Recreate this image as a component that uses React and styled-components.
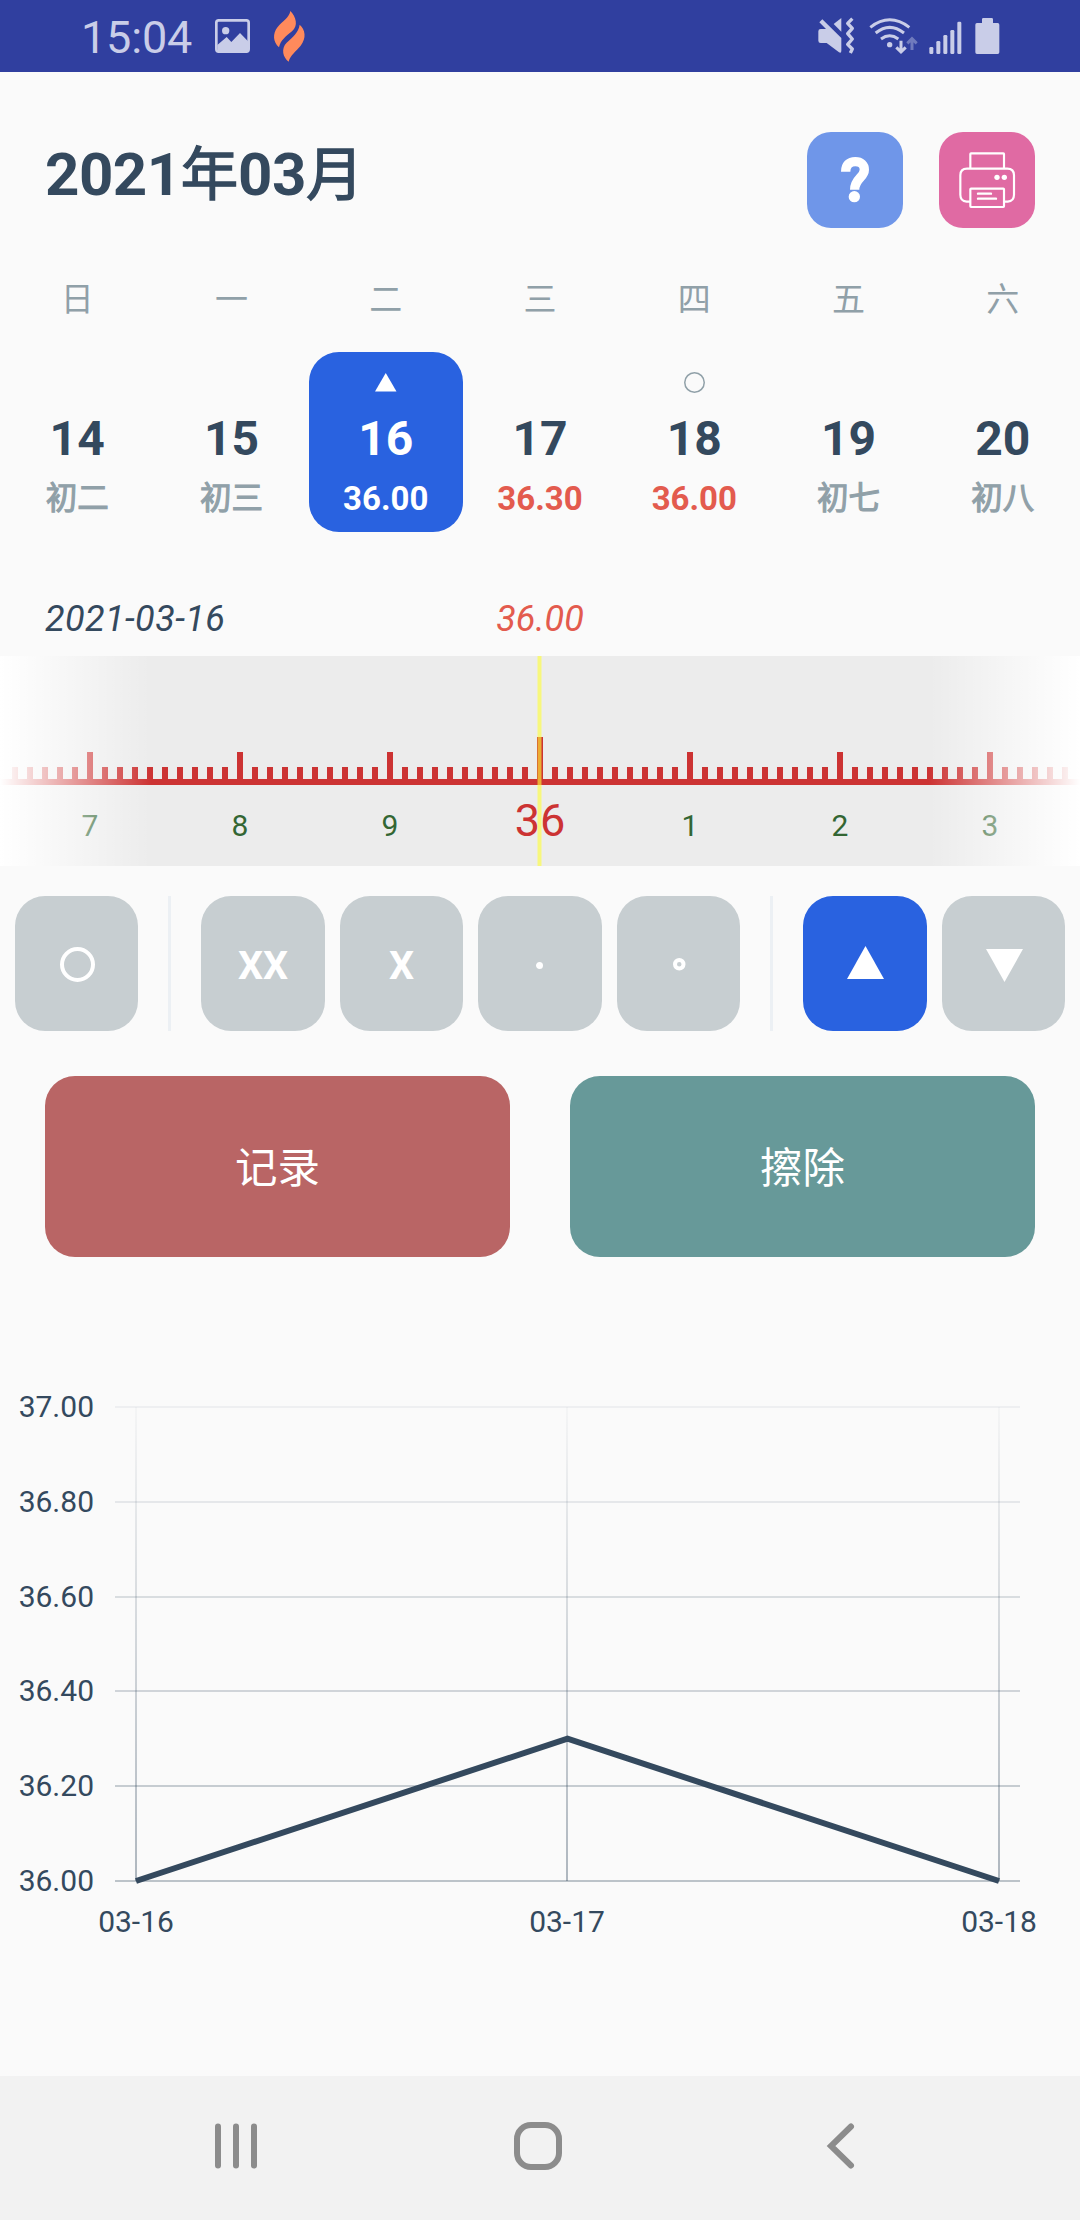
import React from "react";
import styled, { createGlobalStyle, css } from "styled-components";

const GlobalStyle = createGlobalStyle`
  * { box-sizing: border-box; }
  body {
    margin: 0;
    background: #fafafa;
    font-family: Roboto, "Noto Sans CJK SC", sans-serif;
  }
`;

const navy = "#34495e";
const blue = "#2962e0";
const muted = "#90a0a8";
const coral = "#e35b4e";

const Screen = styled.div`
  width: 1080px;
  height: 2220px;
  display: flex;
  flex-direction: column;
  background: #fafafa;
  color: ${navy};
  overflow: hidden;
`;

const StatusBar = styled.header`
  flex: none;
  height: 72px;
  padding: 0 80px 0 81px;
  display: flex;
  justify-content: space-between;
  background: #303f9f;
  color: #c9cde8;
`;

const StatusGroup = styled.div`
  display: flex;
  align-items: flex-start;
`;

const Clock = styled.span`
  width: 134px;
  font-size: 45px;
  line-height: 53px;
  padding-top: 11px;
  letter-spacing: -0.2px;
`;

const Glyph = styled.svg`
  display: block;
  flex: none;
  overflow: visible;
  margin: ${(p) => p.$margin || 0};
`;

const TitleBar = styled.div`
  flex: none;
  height: 204px;
  padding: 60px 45px 0;
  display: flex;
  justify-content: space-between;
  align-items: flex-start;
`;

const Month = styled.h1`
  margin: 0;
  padding-top: 7px;
  font-size: 60px;
  font-weight: 700;
  line-height: 72px;
  letter-spacing: -0.5px;
`;

const Han = styled.span`
  font-size: 0.957em;
  font-weight: 400;
  letter-spacing: 0;
  -webkit-text-stroke: 1.4px currentColor;
`;

const Actions = styled.div`
  display: flex;
  gap: 36px;
`;

const ActionButton = styled.button`
  width: 96px;
  height: 96px;
  padding: 0;
  border: 0;
  border-radius: 24px;
  background: ${(p) => p.$tone};
`;

const Weekdays = styled.div`
  flex: none;
  height: 76px;
  display: grid;
  grid-template-columns: repeat(7, 1fr);
  padding-bottom: 28px;
  align-items: center;
  justify-items: center;
  font-size: 33px;
  line-height: 46px;
  color: ${muted};
`;

const Week = styled.div`
  flex: none;
  height: 180px;
  display: grid;
  grid-template-columns: repeat(7, 1fr);
`;

const DayCell = styled.div`
  display: flex;
  flex-direction: column;
  align-items: center;
  padding-top: 15px;
  border-radius: 30px;
  color: ${navy};
  ${(p) => p.$active && css`
    background: ${blue};
    color: #fff;
  `}
`;

const DayMark = styled.div`
  height: 32px;
  padding-bottom: 2px;
  display: flex;
  align-items: center;
  color: ${(p) => (p.$active ? "#fff" : muted)};
`;

const DayNumber = styled.div`
  font-size: 48px;
  font-weight: 700;
  line-height: 60px;
  padding-top: 10px;
`;

const DayNote = styled.div`
  margin-top: 8px;
  font-size: 31.5px;
  line-height: 44px;
  color: ${muted};
  -webkit-text-stroke: 1.1px currentColor;
  ${(p) => p.$reading && css`
    font-size: 33px;
    font-weight: 700;
    color: ${p.$active ? "#fff" : coral};
    -webkit-text-stroke: 0;
  `}
`;

const Summary = styled.div`
  flex: none;
  height: 124px;
  padding: 66px 45px 0;
  display: grid;
  grid-template-columns: 1fr auto 1fr;
  align-items: start;
  font-size: 36px;
  line-height: 42px;
  font-style: italic;
`;

const SummaryDate = styled.span`
  letter-spacing: 0.4px;
`;

const SummaryTemp = styled.span`
  color: ${coral};
`;

const RulerPanel = styled.div`
  flex: none;
  height: 210px;
  background: #ececec;
`;

const TagRow = styled.div`
  flex: none;
  display: flex;
  gap: 15px;
  height: 165px;
  padding: 30px 15px 0;
`;

const TagButton = styled.button`
  flex: 1 1 0;
  min-width: 0;
  padding: 0;
  border: 0;
  border-radius: 30px;
  display: flex;
  align-items: center;
  justify-content: center;
  background: ${(p) => (p.$active ? blue : "#c7ced1")};
  color: #fff;
  font-family: inherit;
  font-size: 39.5px;
  font-weight: 700;
  line-height: 48px;
`;

const TagLabel = styled.span`
  padding-top: 4px;
`;

const TagDivider = styled.div`
  flex: none;
  width: 3px;
  margin: 0 15px;
  background: #ecf0f4;
`;

const CommandRow = styled.div`
  flex: none;
  display: grid;
  grid-template-columns: 1fr 1fr;
  gap: 60px;
  height: 226px;
  padding: 45px 45px 0;
`;

const CommandButton = styled.button`
  padding: 5px 0 0;
  border: 0;
  border-radius: 30px;
  background: ${(p) => p.$tone};
  color: #fff;
  font-family: inherit;
  font-size: 42.5px;
  line-height: 60px;
`;

const ChartPanel = styled.section`
  flex: 1;
  padding-top: 119px;
`;

const NavBar = styled.nav`
  flex: none;
  height: 144px;
  padding: 46px 226px 0 215px;
  display: flex;
  justify-content: space-between;
  background: #f2f2f2;
  color: #8c8c8c;
`;

const Triangle = ({ w, h, down, margin }) => (
  <Glyph $margin={margin} width={w} height={h} viewBox="0 0 20 20" preserveAspectRatio="none">
    <path fill="currentColor" d={down ? "M0 0H20L10 20Z" : "M10 0L20 20H0Z"} />
  </Glyph>
);

const Ring = ({ size, stroke, margin }) => (
  <Glyph $margin={margin} width={size} height={size}>
    <circle cx={size / 2} cy={size / 2} r={(size - stroke) / 2} fill="none" stroke="currentColor" strokeWidth={stroke} />
  </Glyph>
);

const Status = () => (
  <StatusBar>
    <StatusGroup>
      <Clock>15:04</Clock>
      <Glyph width="35" height="34" viewBox="645 57 105 102" $margin="19px 24px 0 0">
        <rect x="649" y="61" width="97" height="94" rx="7" fill="none" stroke="currentColor" strokeWidth="8" />
        <circle cx="677" cy="92" r="11" fill="currentColor" />
        <path d="M652 135L680 111L694 126L720 99L744 124V154H652Z" fill="currentColor" />
      </Glyph>
      <Glyph width="31" height="51" viewBox="822 32 93 153" $margin="11px 0 0" fill="#ff8a5c">
        <path d="M871 32C888 49 896 76 876 93C858 108 842 119 837 141C819 125 817 100 833 80C849 61 867 53 871 32Z" />
        <path d="M899 73C916 88 920 112 902 136C888 154 871 163 866 184C849 171 842 145 860 127C878 110 895 98 899 73Z" />
      </Glyph>
    </StatusGroup>
    <StatusGroup>
      <Glyph width="182" height="36" viewBox="113 54 546 108" $margin="18px 0 0" fill="currentColor">
        <path d="M114 94Q114 87 121 87H137L117 67L126 58L183 114V152Q183 161 176 157L139 129H121Q114 129 114 122Z" />
        <path d="M183 54V95L160 72Z" />
        <path d="M216 56L202 70L216 85L202 101L216 117L202 133L216 147L210 159" fill="none" stroke="currentColor" strokeWidth="10" strokeLinejoin="round" />
        <g fill="none" stroke="currentColor" strokeWidth="9">
          <path d="M270 82Q328 37 387 82" />
          <path d="M286 99Q328 65 371 99" />
          <path d="M302 117Q328 98 354 117" />
          <path d="M362 122V155M348 142L362 156L376 142" />
          <path d="M395 150V118M381 130L395 116L409 130" opacity=".42" />
        </g>
        <circle cx="328" cy="134" r="8" />
        <rect x="447" y="141" width="12" height="21" rx="4" />
        <rect x="468" y="123" width="12" height="39" rx="4" />
        <rect x="489" y="105" width="12" height="57" rx="4" />
        <rect x="510" y="90" width="12" height="72" rx="4" />
        <rect x="531" y="65" width="12" height="97" rx="4" />
        <path d="M605 58Q605 54 609 54H634Q638 54 638 58V69H652Q657 69 657 74V157Q657 162 652 162H590Q585 162 585 157V74Q585 69 590 69H605Z" />
      </Glyph>
    </StatusGroup>
  </StatusBar>
);

const HelpIcon = () => (
  <Glyph width="96" height="96" viewBox="81 396 288 288">
    <path d="M197 515C197 495 208 485 226 485C243 485 253 495 253 509C253 533 224 535 224 569" fill="none" stroke="#fff" strokeWidth="28" />
    <circle cx="223" cy="590" r="17" fill="#fff" />
  </Glyph>
);

const PrinterIcon = () => (
  <Glyph width="96" height="96" viewBox="477 396 288 288" fill="none" stroke="#fff" strokeWidth="6.5">
    <path d="M571 506V462Q571 460 573 460H670Q672 460 672 462V506" />
    <path d="M571 605H560Q541 603 541 584V526Q541 506 561 506H682Q702 506 702 526V584Q702 603 683 605H672" />
    <rect x="571" y="566" width="101" height="55" rx="2" />
    <path d="M594 581H633M594 596H648" strokeWidth="7" strokeLinecap="round" />
    <circle cx="651" cy="532" r="8" fill="#fff" stroke="none" />
    <circle cx="673" cy="532" r="8" fill="#fff" stroke="none" />
  </Glyph>
);

const days = [
  { n: 14, note: "初二" },
  { n: 15, note: "初三" },
  { n: 16, note: "36.00", reading: true, active: true, mark: <Triangle w={21.5} h={18.5} margin="1px 0 0" /> },
  { n: 17, note: "36.30", reading: true },
  { n: 18, note: "36.00", reading: true, mark: <Ring size={21} stroke={1.5} margin="1px 0 0" /> },
  { n: 19, note: "初七" },
  { n: 20, note: "初八" },
];

const rulerLabels = [
  [90, "7"], [240, "8"], [390, "9"], [690, "1"], [840, "2"], [990, "3"],
];

const Ruler = () => (
  <Glyph width="1080" height="210" viewBox="0 0 1080 210">
    <defs>
      <linearGradient id="edges">
        <stop offset="0" stopColor="#fff" />
        <stop offset="0.14" stopColor="#fff" stopOpacity="0" />
        <stop offset="0.86" stopColor="#fff" stopOpacity="0" />
        <stop offset="1" stopColor="#fff" />
      </linearGradient>
    </defs>
    <g fill="#cc3333">
      <rect x="0" y="123" width="1080" height="6" />
      {Array.from({ length: 71 }, (_, i) => {
        const offset = i - 35;
        const top = offset === 0 ? 81 : offset % 10 === 0 ? 96 : 111;
        return <rect key={i} x={537 + offset * 15} y={top} width="6" height={124 - top} />;
      })}
    </g>
    <g fill="#336633" fontSize="30" textAnchor="middle">
      {rulerLabels.map(([x, label]) => <text key={x} x={x} y="180">{label}</text>)}
    </g>
    <text x="540" y="180" fill="#cc3333" fontSize="45" textAnchor="middle">36</text>
    <rect width="1080" height="210" fill="url(#edges)" />
    <rect x="537.5" width="4" height="210" fill="#ffff33" fillOpacity=".6" />
  </Glyph>
);

const gridRows = [
  ["37.00", 0.06], ["36.80", 0.1], ["36.60", 0.16], ["36.40", 0.21], ["36.20", 0.26], ["36.00", 0.31],
];

const Chart = () => (
  <Glyph width="1080" height="570" viewBox="0 1376 1080 570">
    <defs>
      <linearGradient id="columns" gradientUnits="userSpaceOnUse" x1="0" y1="1407" x2="0" y2="1881">
        <stop offset="0" stopColor={navy} stopOpacity=".03" />
        <stop offset="1" stopColor={navy} stopOpacity=".38" />
      </linearGradient>
    </defs>
    {gridRows.map(([label, alpha], i) => (
      <g key={label}>
        <rect x="115" y={Math.round(1406 + i * 94.8)} width="905" height="2" fill={navy} fillOpacity={alpha} />
        <text x="94" y={1417 + i * 94.8} textAnchor="end" fontSize="30" fill={navy}>{label}</text>
      </g>
    ))}
    {[[136, "03-16"], [567, "03-17"], [999, "03-18"]].map(([x, label]) => (
      <g key={label}>
        <rect x={x - 1} y="1407" width="2" height="474" fill="url(#columns)" />
        <text x={x} y="1932" textAnchor="middle" fontSize="30" fill={navy}>{label}</text>
      </g>
    ))}
    <path d="M136 1881L567.5 1738.7L999 1881" fill="none" stroke={navy} strokeWidth="6" />
  </Glyph>
);

export default function App() {
  return (
    <>
      <GlobalStyle />
      <Screen>
        <Status />
        <TitleBar>
          <Month>2021<Han>年</Han>03<Han>月</Han></Month>
          <Actions>
            <ActionButton $tone="#6f96e9"><HelpIcon /></ActionButton>
            <ActionButton $tone="#e06aa3"><PrinterIcon /></ActionButton>
          </Actions>
        </TitleBar>
        <Weekdays>
          {["日", "一", "二", "三", "四", "五", "六"].map((d) => <span key={d}>{d}</span>)}
        </Weekdays>
        <Week>
          {days.map((d) => (
            <DayCell key={d.n} $active={d.active}>
              <DayMark $active={d.active}>{d.mark}</DayMark>
              <DayNumber>{d.n}</DayNumber>
              <DayNote $reading={d.reading} $active={d.active}>{d.note}</DayNote>
            </DayCell>
          ))}
        </Week>
        <Summary>
          <SummaryDate>2021-03-16</SummaryDate>
          <SummaryTemp>36.00</SummaryTemp>
        </Summary>
        <RulerPanel><Ruler /></RulerPanel>
        <TagRow>
          <TagButton><Ring size={35} stroke={4} margin="2px 0 0 1px" /></TagButton>
          <TagDivider />
          <TagButton><TagLabel>XX</TagLabel></TagButton>
          <TagButton><TagLabel>X</TagLabel></TagButton>
          <TagButton><Ring size={7} stroke={3.5} margin="4px 1px 0 0" /></TagButton>
          <TagButton><Ring size={12.5} stroke={4} margin="2px 0 0 1px" /></TagButton>
          <TagDivider />
          <TagButton $active><Triangle w={37} h={33} margin="0 0 2px 2px" /></TagButton>
          <TagButton><Triangle w={37} h={33} down margin="4px 0 0 2px" /></TagButton>
        </TagRow>
        <CommandRow>
          <CommandButton $tone="#b96565">记录</CommandButton>
          <CommandButton $tone="#679999">擦除</CommandButton>
        </CommandRow>
        <ChartPanel><Chart /></ChartPanel>
        <NavBar>
          <Glyph width="42" height="48" viewBox="0 0 42 48" fill="currentColor">
            <rect x="0" y="1.5" width="6" height="45" rx="3" />
            <rect x="18" y="1.5" width="6" height="45" rx="3" />
            <rect x="36" y="1.5" width="6" height="45" rx="3" />
          </Glyph>
          <Glyph width="48" height="48" viewBox="0 0 48 48" $margin="0 8px 0 0">
            <rect x="3" y="3" width="42" height="42" rx="14" fill="none" stroke="currentColor" strokeWidth="6" />
          </Glyph>
          <Glyph width="27" height="48" viewBox="0 0 27 48">
            <path d="M24 4.5L4 24L24 43.5" fill="none" stroke="currentColor" strokeWidth="6" strokeLinecap="round" />
          </Glyph>
        </NavBar>
      </Screen>
    </>
  );
}
